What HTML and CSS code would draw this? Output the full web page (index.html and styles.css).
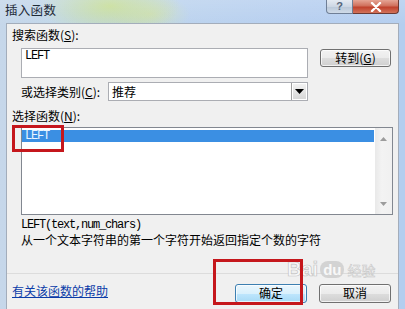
FILE: index.html
```html
<!DOCTYPE html>
<html>
<head>
<meta charset="utf-8">
<link rel="stylesheet" href="styles.css">
</head>
<body>
<div class="window">
  <div class="titlebar">
    <span class="title">插入函数</span>
    <div class="caption">
      <span class="cap-help">?</span>
      <span class="cap-close"><svg width="14" height="10" viewBox="0 0 14 10"><path d="M3 1 L11 9 M11 1 L3 9" stroke="#fff" stroke-width="2.4" stroke-linecap="round"/></svg></span>
    </div>
  </div>
  <div class="client">
    <div class="label first">搜索函数(<u>S</u>):</div>
    <div class="search-row">
      <div class="textbox">LEFT</div>
      <div class="btn btn-goto">转到(<u>G</u>)</div>
    </div>
    <div class="cat-row">
      <span class="cat-label">或选择类别(<u>C</u>):</span>
      <div class="select">
        <span class="select-text">推荐</span>
        <span class="drop"><svg width="9" height="5" viewBox="0 0 9 5"><path d="M0 0 H9 L4.5 5 Z" fill="#000"/></svg></span>
      </div>
    </div>
    <div class="label fn-label">选择函数(<u>N</u>):</div>
    <div class="list">
      <div class="items"><div class="item sel">LEFT</div></div>
      <div class="scrollbar">
        <svg width="7" height="4" viewBox="0 0 7 4"><path d="M0 4 L3.5 0 L7 4 Z" fill="#9c9c9c"/></svg>
        <svg width="7" height="4" viewBox="0 0 7 4"><path d="M0 0 L7 0 L3.5 4 Z" fill="#9c9c9c"/></svg>
      </div>
    </div>
    <div class="sig">LEFT(text,num_chars)</div>
    <div class="desc">从一个文本字符串的第一个字符开始返回指定个数的字符</div>
    <div class="sep"></div>
    <div class="bottom-row">
      <a class="help">有关该函数的帮助</a>
      <div class="btn btn-ok">确定</div>
      <div class="btn btn-cancel">取消</div>
    </div>
  </div>
  <div class="watermark"><span class="wm-bai">Bai</span><span class="wm-du">du</span><span class="wm-jy">经验</span></div>
  <div class="mark mark1"></div>
  <div class="mark mark2"></div>
</div>
</body>
</html>
```

FILE: styles.css
```css
html, body {
  margin: 0;
  padding: 0;
}
body {
  width: 405px;
  height: 309px;
  overflow: hidden;
  font-family: "Noto Sans CJK SC", "Noto Sans", sans-serif;
  font-size: 12px;
  color: #000;
}
.window {
  position: relative;
  width: 405px;
  height: 309px;
  display: flex;
  flex-direction: column;
  background:
    linear-gradient(to bottom, rgba(255,255,255,0.15), rgba(255,255,255,0) 25px),
    radial-gradient(ellipse 70px 30px at 110px 6px, rgba(200,222,150,0.95), rgba(200,222,150,0) 100%),
    radial-gradient(ellipse 40px 20px at 150px 14px, rgba(210,226,170,0.7), rgba(210,226,170,0) 100%),
    linear-gradient(to right, #c6d7ea 0px, #c3d6ea 30px, #c2d8e9 60px, #bcd3ee 180px, #b7cff0 300px, #b4ceef 405px);
}
.titlebar {
  height: 23px;
  display: flex;
  align-items: flex-start;
  padding: 0 6px 0 5px;
  flex-shrink: 0;
}
.title {
  font-size: 12.5px;
  line-height: 18px;
  margin-top: 1px;
  color: #1e2a38;
  letter-spacing: 0.3px;
}
.caption {
  margin-left: auto;
  display: flex;
}
.cap-help {
  width: 25px;
  height: 13px;
  border: 1px solid #6f7f96;
  border-top: none;
  border-radius: 0 0 0 4px;
  background: linear-gradient(to bottom, #e4eaf2, #cdd7e4 50%, #b9c7d8 51%, #cfdbe8);
  font-family: "Liberation Sans", sans-serif;
  font-size: 11px;
  font-weight: bold;
  line-height: 12px;
  text-align: center;
  color: #55657a;
}
.cap-close {
  width: 45px;
  height: 13px;
  border: 1px solid #6b3a34;
  border-left: none;
  border-top: none;
  border-radius: 0 0 4px 0;
  background: linear-gradient(to bottom, #e5a595, #d0705c 45%, #c0412c 55%, #d2735a);
  display: flex;
  align-items: center;
  justify-content: center;
}
.client {
  flex: 1;
  margin: 0 6px;
  border: 1px solid #a3adbb;
  border-bottom: none;
  background: #f0f0f0;
  padding: 0 5px;
  display: flex;
  flex-direction: column;
}
.label {
  line-height: 15px;
  height: 15px;
}
.label.first {
  margin-top: 3px;
}
.search-row {
  margin-top: 6px;
  margin-left: 9px;
  display: flex;
  align-items: flex-start;
  gap: 12px;
}
.mono {
  font-family: "Liberation Mono", monospace;
}
.textbox {
  height: 28px;
  border: 1px solid #abadb3;
  background: #fff;
  padding: 0 3px;
  box-sizing: content-box;
  width: 279px;
  font-family: "Liberation Mono", monospace;
  font-size: 12px;
  letter-spacing: -1.2px;
  line-height: 15px;
}
.btn {
  box-sizing: border-box;
  height: 18px;
  border: 1px solid #707070;
  border-radius: 3px;
  background: linear-gradient(to bottom, #f2f2f2, #ebebeb 50%, #dddddd 51%, #cfcfcf);
  box-shadow: inset 0 0 0 1px rgba(255,255,255,0.7);
  text-align: center;
  line-height: 16px;
  font-size: 12px;
}
.btn-goto {
  width: 71px;
  margin-top: 1px;
}
.cat-row {
  margin-top: 4px;
  margin-left: 9px;
  display: flex;
  align-items: center;
  height: 19px;
}
.cat-label {
  width: 87px;
  line-height: 15px;
}
.select {
  box-sizing: border-box;
  width: 200px;
  height: 19px;
  border: 1px solid #abadb3;
  background: #fff;
  display: flex;
  align-items: center;
}
.select-text {
  padding-left: 3px;
  line-height: 15px;
  flex: 1;
}
.drop {
  box-sizing: border-box;
  width: 16px;
  height: 17px;
  border-left: 1px solid #a0a0a0;
  background: linear-gradient(to bottom, #f4f4f4, #e4e4e4 50%, #d6d6d6);
  box-shadow: inset 0 0 0 1px #fff;
  display: flex;
  align-items: center;
  justify-content: center;
}
.fn-label {
  margin-top: 7px;
}
.list {
  margin-top: 4px;
  margin-left: 9px;
  box-sizing: border-box;
  height: 88px;
  border: 1px solid #828790;
  background: #fff;
  display: flex;
}
.items {
  flex: 1;
  padding-top: 2px;
  padding-right: 1px;
}
.item {
  height: 12px;
  line-height: 12px;
  padding-left: 3px;
  font-family: "Liberation Mono", monospace;
  font-size: 12px;
  letter-spacing: -1.2px;
}
.item.sel {
  background: #3b8fe3;
  color: #eaf6ff;
}
.scrollbar {
  width: 17px;
  background: linear-gradient(to right, #e9e9e9, #f3f3f3 40%, #f0f0f0);
  display: flex;
  flex-direction: column;
  align-items: center;
  justify-content: space-between;
  padding: 9px 0 8px;
  box-sizing: border-box;
}
.sig {
  margin-top: 3px;
  margin-left: 9px;
  line-height: 14px;
  font-family: "Liberation Mono", monospace;
  font-size: 12px;
  letter-spacing: -1.2px;
}
.desc {
  margin-left: 9px;
  line-height: 15px;
}
.sep {
  margin: 26px -5px 0;
  height: 1px;
  background: #dcdcdc;
}
.bottom-row {
  margin-top: 10px;
  display: flex;
  align-items: flex-start;
  padding-right: 2px;
}
.help {
  margin-top: -1px;
  line-height: 15px;
  color: #0b3ca8;
  text-decoration: underline;
}
.btn-ok {
  margin-left: auto;
  width: 72px;
  height: 19px;
  border-color: #3c7fb1;
  background: linear-gradient(to bottom, #eaf6fd, #d9f0fc 50%, #bee6fd 51%, #a7d9f5);
}
.btn-cancel {
  margin-left: 12px;
  width: 72px;
  height: 19px;
}
.mark {
  position: absolute;
  border: 3px solid #c5171c;
  box-sizing: border-box;
}
.mark1 {
  left: 12px;
  top: 125px;
  width: 52px;
  height: 27px;
}
.mark2 {
  left: 213px;
  top: 259px;
  width: 90px;
  height: 46px;
}
.watermark {
  position: absolute;
  left: 287px;
  top: 258px;
  display: flex;
  align-items: center;
  font-family: "Liberation Sans", sans-serif;
  opacity: 0.85;
}
.wm-bai {
  font-size: 20px;
  font-weight: bold;
  color: #fbfbfb;
  -webkit-text-stroke: 0.7px #bdbdbd;
}
.wm-du {
  margin-left: 2px;
  padding: 0 3px;
  font-size: 15px;
  font-weight: bold;
  color: #fbfbfb;
  background: #cfcfcf;
  border-radius: 8px;
  line-height: 17px;
}
.wm-jy {
  margin-left: 3px;
  font-family: "Noto Sans CJK SC", sans-serif;
  font-size: 14px;
  color: #fbfbfb;
  -webkit-text-stroke: 0.5px #bdbdbd;
}
```
